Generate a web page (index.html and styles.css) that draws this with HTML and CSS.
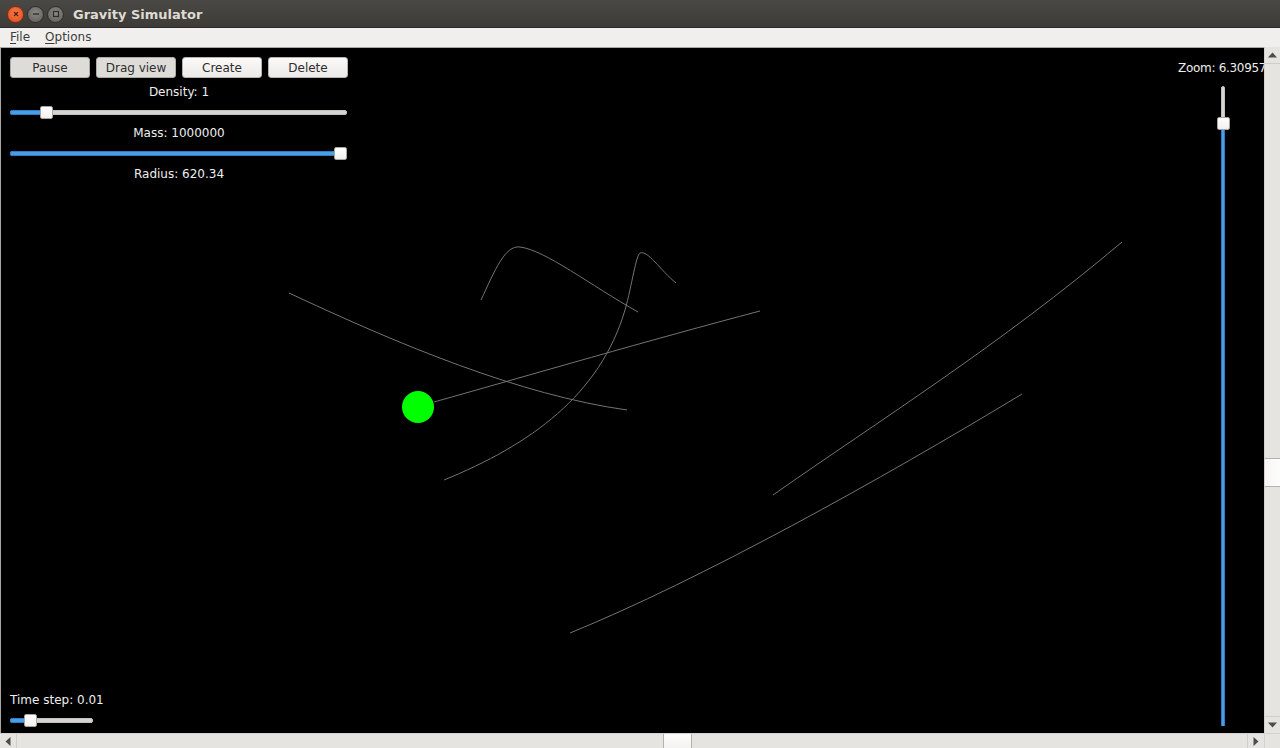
FILE: index.html
```html
<!DOCTYPE html>
<html>
<head>
<meta charset="utf-8">
<title>Gravity Simulator</title>
<link rel="stylesheet" href="styles.css">
</head>
<body>
<div class="window">
  <div class="titlebar">
    <div class="wbtns">
      <span class="wbtn close"><svg width="10" height="10" viewBox="0 0 10 10"><path d="M3 3 L7 7 M7 3 L3 7" stroke="#5a1a08" stroke-width="1.2"/></svg></span>
      <span class="wbtn"><svg width="10" height="10" viewBox="0 0 10 10"><path d="M2 5 H8" stroke="#2e2d2a" stroke-width="1.4"/></svg></span>
      <span class="wbtn"><svg width="10" height="10" viewBox="0 0 10 10"><rect x="2.5" y="2.5" width="5" height="5" fill="none" stroke="#2e2d2a" stroke-width="1.2"/></svg></span>
    </div>
    <div class="wtitle">Gravity Simulator</div>
  </div>
  <div class="menubar">
    <span class="menu"><u>F</u>ile</span>
    <span class="menu"><u>O</u>ptions</span>
  </div>
  <div class="main">
    <div class="row">
      <div class="canvas">
        <svg class="trails" viewBox="1 48 1263 685" width="1263" height="685">
          <g fill="none" stroke="#747474" stroke-width="1">
            <path d="M434 402 C 530 375, 650 340, 760 311"/>
            <path d="M289 293 C 400 345, 520 395, 627 410"/>
            <path d="M481 300 C 495 270, 505 245, 520 247 C 545 250, 590 285, 638 312"/>
            <path d="M444 480 C 530 445, 600 395, 625 310 C 632 285, 636 255, 640 253 C 648 250, 660 270, 676 283"/>
            <path d="M773 495 C 880 420, 1000 345, 1122 242"/>
            <path d="M570 633 C 700 580, 880 480, 1022 394"/>
          </g>
          <circle cx="418" cy="407" r="16" fill="#00ff00"/>
        </svg>
        <div class="leftcol">
          <div class="controls">
            <div class="buttons">
              <button class="btn pressed">Pause</button>
              <button class="btn pressed">Drag view</button>
              <button class="btn">Create</button>
              <button class="btn">Delete</button>
            </div>
            <div class="label">Density: 1</div>
            <div class="hslider"><div class="fill" style="width:36px"></div><div class="handle" style="left:30px"></div></div>
            <div class="label">Mass: 1000000</div>
            <div class="hslider"><div class="fill" style="width:330px"></div><div class="handle" style="left:324px"></div></div>
            <div class="label">Radius: 620.34</div>
          </div>
          <div class="timestep">
            <div class="label left">Time step: 0.01</div>
            <div class="hslider short"><div class="fill" style="width:20px"></div><div class="handle" style="left:14px"></div></div>
          </div>
        </div>
        <div class="rightcol">
          <div class="zlabel">Zoom: 6.30957</div>
          <div class="vslider"><div class="vfill" style="top:37px"></div><div class="vhandle" style="top:31px"></div></div>
        </div>
      </div>
      <div class="vscroll">
        <div class="sarrow"><svg width="9" height="6" viewBox="0 0 9 6"><path d="M0 5.5 L4.5 0.5 L9 5.5 Z" fill="#4c4c4c"/></svg></div>
        <div class="strack v"><div class="vthumb"></div></div>
        <div class="sarrow"><svg width="9" height="6" viewBox="0 0 9 6"><path d="M0 0.5 L4.5 5.5 L9 0.5 Z" fill="#4c4c4c"/></svg></div>
      </div>
    </div>
    <div class="hrow">
      <div class="hscroll">
        <div class="harrow"><svg width="6" height="9" viewBox="0 0 6 9"><path d="M5.5 0 L0.5 4.5 L5.5 9 Z" fill="#4c4c4c"/></svg></div>
        <div class="strack h"><div class="hthumb"></div></div>
        <div class="harrow"><svg width="6" height="9" viewBox="0 0 6 9"><path d="M0.5 0 L5.5 4.5 L0.5 9 Z" fill="#4c4c4c"/></svg></div>
      </div>
      <div class="corner"></div>
    </div>
  </div>
</div>
</body>
</html>
```

FILE: styles.css
```css
html, body {
  margin: 0;
  padding: 0;
  width: 1280px;
  height: 748px;
  overflow: hidden;
  background: #000;
}
.window {
  width: 1280px;
  height: 748px;
  display: flex;
  flex-direction: column;
  font-family: "DejaVu Sans", sans-serif;
  font-size: 12px;
}
.titlebar {
  height: 28px;
  flex: none;
  display: flex;
  align-items: center;
  background: linear-gradient(#4a4945, #3c3b37);
  box-sizing: border-box;
  border-bottom: 1px solid #2c2b28;
}
.wbtns {
  display: flex;
  gap: 3px;
  padding-left: 7px;
  padding-top: 1px;
}
.wbtn {
  width: 15px;
  height: 15px;
  border-radius: 50%;
  background: radial-gradient(circle at 50% 40%, #8a8883, #5d5c58);
  border: 1px solid #2f2e2b;
  display: flex;
  align-items: center;
  justify-content: center;
  box-sizing: content-box;
}
.wbtn.close {
  background: radial-gradient(circle at 50% 40%, #f37c4e, #df4a16);
  border-color: #8c2b0b;
}
.wtitle {
  margin-left: 9px;
  color: #dfdbd2;
  font-weight: bold;
  font-size: 13px;
  padding-top: 1px;
}
.menubar {
  height: 19px;
  flex: none;
  background: #f0efed;
  display: flex;
  align-items: center;
  gap: 15px;
  padding-left: 10px;
  color: #3c3c3c;
  box-sizing: border-box;
  padding-bottom: 1px;
}
.menu u {
  text-decoration-thickness: 1px;
  text-underline-offset: 2px;
}
.main {
  flex: 1;
  display: flex;
  flex-direction: column;
  min-height: 0;
}
.row {
  flex: 1;
  display: flex;
  min-height: 0;
}
.canvas {
  flex: 1;
  position: relative;
  background: #000;
  border-top: 1px solid #a9a7a3;
  border-left: 1px solid #a9a7a3;
  display: flex;
  overflow: hidden;
}
.trails {
  position: absolute;
  left: 0;
  top: 0;
}
.leftcol {
  position: relative;
  display: flex;
  flex-direction: column;
  justify-content: space-between;
  padding: 9px 0 6px 9px;
  width: 338px;
}
.controls {
  display: flex;
  flex-direction: column;
}
.buttons {
  display: flex;
  gap: 6px;
  height: 21px;
}
.btn {
  width: 80px;
  height: 21px;
  margin: 0;
  padding: 0;
  font-family: "DejaVu Sans", sans-serif;
  font-size: 12px;
  color: #2e2e2e;
  border: 1px solid #b7b4ae;
  border-radius: 3px;
  background: linear-gradient(#fbfaf9, #eceae7);
}
.btn.pressed {
  background: #dedcd9;
  border-color: #aeaba5;
}
.label {
  height: 14px;
  line-height: 14px;
  color: #eeeeee;
  text-align: center;
  margin-top: 7px;
}
.label.left {
  text-align: left;
  margin-top: 0;
}
.hslider {
  position: relative;
  height: 14px;
  margin-top: 6px;
}
.hslider::before {
  content: "";
  position: absolute;
  left: 0;
  right: 1px;
  top: 5px;
  height: 3px;
  background: #d6d5d2;
  border: 1px solid #c2c0bc;
  border-radius: 2px;
  box-sizing: content-box;
}
.hslider.short {
  width: 84px;
}
.fill {
  position: absolute;
  left: 0;
  top: 5px;
  height: 3px;
  background: #4a9ee6;
  border: 1px solid #2d7dc6;
  border-radius: 2px;
}
.handle {
  position: absolute;
  top: 1px;
  width: 11px;
  height: 11px;
  background: linear-gradient(#ffffff, #f1f0ee);
  border: 1px solid #a8a5a0;
  border-radius: 2px;
}
.timestep {
  display: flex;
  flex-direction: column;
}
.rightcol {
  margin-left: auto;
  width: 86px;
  flex: none;
  display: flex;
  flex-direction: column;
  padding-top: 13px;
  padding-bottom: 7px;
  position: relative;
}
.zlabel {
  height: 14px;
  line-height: 14px;
  color: #eeeeee;
  white-space: nowrap;
  letter-spacing: -0.3px;
}
.vslider {
  flex: 1;
  position: relative;
  margin-top: 11px;
  width: 14px;
  margin-left: 38px;
}
.vslider::before {
  content: "";
  position: absolute;
  left: 5px;
  top: 0;
  bottom: 0;
  background: #d6d5d2;
  border: 1px solid #c2c0bc;
  border-radius: 2px;
  box-sizing: border-box;
  width: 4px;
}
.vfill {
  position: absolute;
  left: 5px;
  width: 4px;
  bottom: 0;
  background: #4a9ee6;
  border-left: 1px solid #2d7dc6;
  border-right: 1px solid #2d7dc6;
  box-sizing: border-box;
}
.vhandle {
  position: absolute;
  left: 1px;
  width: 11px;
  height: 11px;
  background: linear-gradient(#ffffff, #f1f0ee);
  border: 1px solid #a8a5a0;
  border-radius: 2px;
}
.vscroll {
  width: 16px;
  flex: none;
  background: #e6e4e1;
  border-left: 1px solid #d4d2ce;
  box-sizing: border-box;
  display: flex;
  flex-direction: column;
}
.sarrow {
  height: 16px;
  flex: none;
  display: flex;
  align-items: center;
  justify-content: center;
}
.strack {
  flex: 1;
  position: relative;
}
.strack.v {
  border-top: 1px solid #d0cecb;
  border-bottom: 1px solid #d0cecb;
}
.vthumb {
  position: absolute;
  left: 0;
  right: 0;
  top: 394px;
  height: 27px;
  background: linear-gradient(90deg, #f7f6f5, #fdfdfc);
  border-top: 1px solid #b5b2ad;
  border-bottom: 1px solid #b5b2ad;
}
.hrow {
  height: 15px;
  flex: none;
  display: flex;
}
.hscroll {
  flex: 1;
  display: flex;
  background: #e6e4e1;
  border-top: 1px solid #d4d2ce;
  box-sizing: border-box;
}
.harrow {
  width: 16px;
  flex: none;
  display: flex;
  align-items: center;
  justify-content: center;
}
.strack.h {
  border-left: 1px solid #d0cecb;
  border-right: 1px solid #d0cecb;
}
.hthumb {
  position: absolute;
  top: 0;
  bottom: 0;
  left: 646px;
  width: 27px;
  background: linear-gradient(#fdfdfc, #f3f2f0);
  border-left: 1px solid #b5b2ad;
  border-right: 1px solid #b5b2ad;
}
.corner {
  width: 16px;
  flex: none;
  background: #e6e4e1;
  border-top: 1px solid #d4d2ce;
  border-left: 1px solid #d4d2ce;
  box-sizing: border-box;
}
```
